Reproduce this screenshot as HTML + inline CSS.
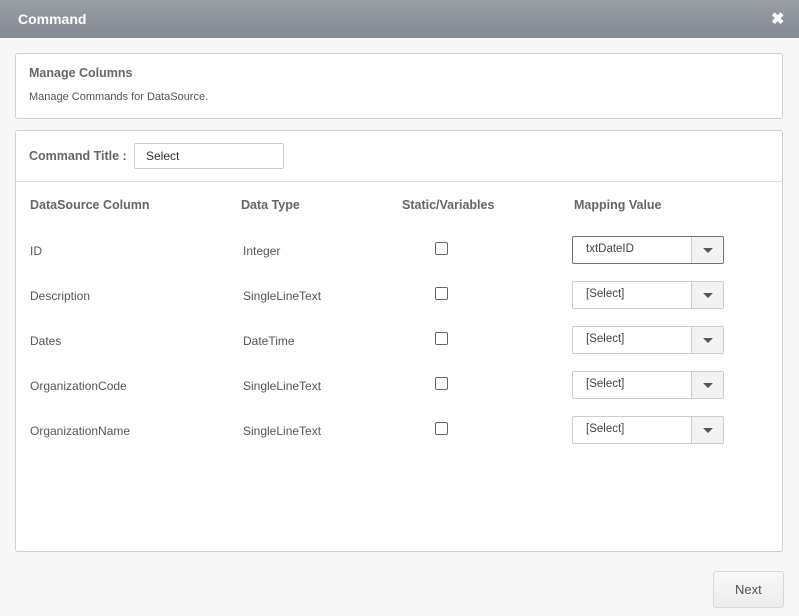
<!DOCTYPE html>
<html><head><style>
body{margin:0;width:799px;height:616px;background:#f7f7f7;font-family:"Liberation Sans",sans-serif;position:relative;overflow:hidden;color:#555}
.a{position:absolute}
.hdr{left:0;top:0;width:799px;height:38px;background:linear-gradient(#9a9ea5,#858a93)}
.panel{background:#fff;border:1px solid #cfcfcf;border-radius:3px}
.t{font-size:12px;white-space:nowrap}
.h{font-size:12.5px;font-weight:bold;color:#666;white-space:nowrap}
.cb{width:11px;height:11px;border:1px solid #666;border-radius:2px;background:#fff}
.sel{width:150px;height:26px;border:1px solid #ccc;border-radius:2px;background:#fff}
.sel span{position:absolute;left:13px;top:6px;font-size:11.5px;color:#444}
.sel i{position:absolute;right:0;top:0;width:31px;height:26px;border-left:1px solid #ccc;background:#f2f2f2}
.sel i:after{content:"";position:absolute;left:11px;top:11px;border-left:5px solid transparent;border-right:5px solid transparent;border-top:5px solid #555}
</style></head><body>
<div class="a hdr"></div>
<div class="a" style="left:18px;top:11px;color:#fff;font-weight:bold;font-size:14px">Command</div>
<div class="a" style="left:771px;top:9px;color:#fff;font-weight:bold;font-size:16px">✖</div>

<div class="a panel" style="left:15px;top:53px;width:766px;height:64px"></div>
<div class="a h" style="left:29px;top:66px;font-size:12.5px">Manage Columns</div>
<div class="a t" style="left:29px;top:91px;font-size:11px">Manage Commands for DataSource.</div>

<div class="a panel" style="left:15px;top:130px;width:766px;height:420px"></div>
<div class="a" style="left:16px;top:181px;width:766px;height:1px;background:#ddd"></div>
<div class="a h" style="left:29px;top:149px">Command Title :</div>
<div class="a" style="left:134px;top:143px;width:148px;height:24px;border:1px solid #ccc;border-radius:2px;background:#fff"></div>
<div class="a t" style="left:146px;top:149px;color:#333">Select</div>

<div class="a h" style="left:30px;top:198px">DataSource Column</div>
<div class="a h" style="left:241px;top:198px">Data Type</div>
<div class="a h" style="left:402px;top:198px">Static/Variables</div>
<div class="a h" style="left:574px;top:198px">Mapping Value</div>

<div class="a t" style="left:30px;top:244px">ID</div>
<div class="a t" style="left:243px;top:244px">Integer</div>
<div class="a cb" style="left:435px;top:242px"></div>
<div class="a sel" style="left:572px;top:236px;border-color:#6b7380"><span>txtDateID</span><i></i></div>

<div class="a t" style="left:30px;top:289px">Description</div>
<div class="a t" style="left:243px;top:289px">SingleLineText</div>
<div class="a cb" style="left:435px;top:287px"></div>
<div class="a sel" style="left:572px;top:281px"><span>[Select]</span><i></i></div>

<div class="a t" style="left:30px;top:334px">Dates</div>
<div class="a t" style="left:243px;top:334px">DateTime</div>
<div class="a cb" style="left:435px;top:332px"></div>
<div class="a sel" style="left:572px;top:326px"><span>[Select]</span><i></i></div>

<div class="a t" style="left:30px;top:379px">OrganizationCode</div>
<div class="a t" style="left:243px;top:379px">SingleLineText</div>
<div class="a cb" style="left:435px;top:377px"></div>
<div class="a sel" style="left:572px;top:371px"><span>[Select]</span><i></i></div>

<div class="a t" style="left:30px;top:424px">OrganizationName</div>
<div class="a t" style="left:243px;top:424px">SingleLineText</div>
<div class="a cb" style="left:435px;top:422px"></div>
<div class="a sel" style="left:572px;top:416px"><span>[Select]</span><i></i></div>

<div class="a" style="left:713px;top:571px;width:69px;height:35px;border:1px solid #d6d6d6;border-radius:3px;background:linear-gradient(#f7f7f7,#ececec)"></div>
<div class="a" style="left:735px;top:582px;font-size:13px;color:#555">Next</div>
</body></html>
